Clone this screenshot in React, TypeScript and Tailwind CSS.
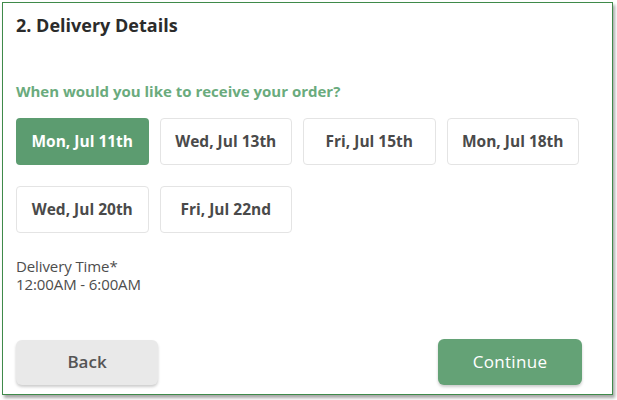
import React, { useState } from "react"

const dates = [
  "Mon, Jul 11th",
  "Wed, Jul 13th",
  "Fri, Jul 15th",
  "Mon, Jul 18th",
  "Wed, Jul 20th",
  "Fri, Jul 22nd",
]

export default function App() {
  const [selected, setSelected] = useState(0)

  return (
    <div className="w-[617px] h-[400px] bg-white font-['Open_Sans','Liberation_Sans',sans-serif] pt-[2px] pl-[2px]">
      {/* Card frame */}
      <div className="w-[611px] h-[393px] border border-[#3f8a4a] bg-white shadow-[2px_3px_3px_rgba(0,0,0,0.35)] flex flex-col px-[13px]">
        <h2 className="mt-[11px] text-[18px] font-bold text-[#2b2b2b] leading-[22px]">
          2. Delivery Details
        </h2>

        <p className="mt-[46px] text-[15px] font-bold text-[#6aab7d] leading-[18px]">
          When would you like to receive your order?
        </p>

        {/* Date picker */}
        <div className="mt-[18px] grid grid-cols-4 gap-x-[11px] gap-y-[21px] w-[563px]">
          {dates.map((d, i) => (
            <button
              key={d}
              onClick={() => setSelected(i)}
              className={
                i === selected
                  ? "h-[47px] rounded-[4px] bg-[#5c9c70] text-white text-[15.5px] font-bold"
                  : "h-[47px] rounded-[4px] bg-white border border-[#e4e4e4] text-[#4a4a4a] text-[15.5px] font-bold"
              }
            >
              {d}
            </button>
          ))}
        </div>

        <div className="mt-[24px] text-[15px] text-[#4d4d4d] leading-[18px] tracking-[-0.1px]">
          <div>Delivery Time*</div>
          <div>12:00AM - 6:00AM</div>
        </div>

        {/* Actions */}
        <div className="mt-auto mb-[9px] flex items-center justify-between w-[566px]">
          <button className="w-[142px] h-[45px] rounded-[6px] bg-[#e9e9e9] text-[#555555] text-[17px] font-semibold shadow-[0_2px_3px_rgba(0,0,0,0.2)]">
            Back
          </button>
          <button className="w-[144px] h-[46px] rounded-[6px] bg-[#64a276] text-white text-[17px] font-medium tracking-[0.3px] shadow-[0_2px_3px_rgba(0,0,0,0.2)]">
            Continue
          </button>
        </div>
      </div>
    </div>
  )
}
